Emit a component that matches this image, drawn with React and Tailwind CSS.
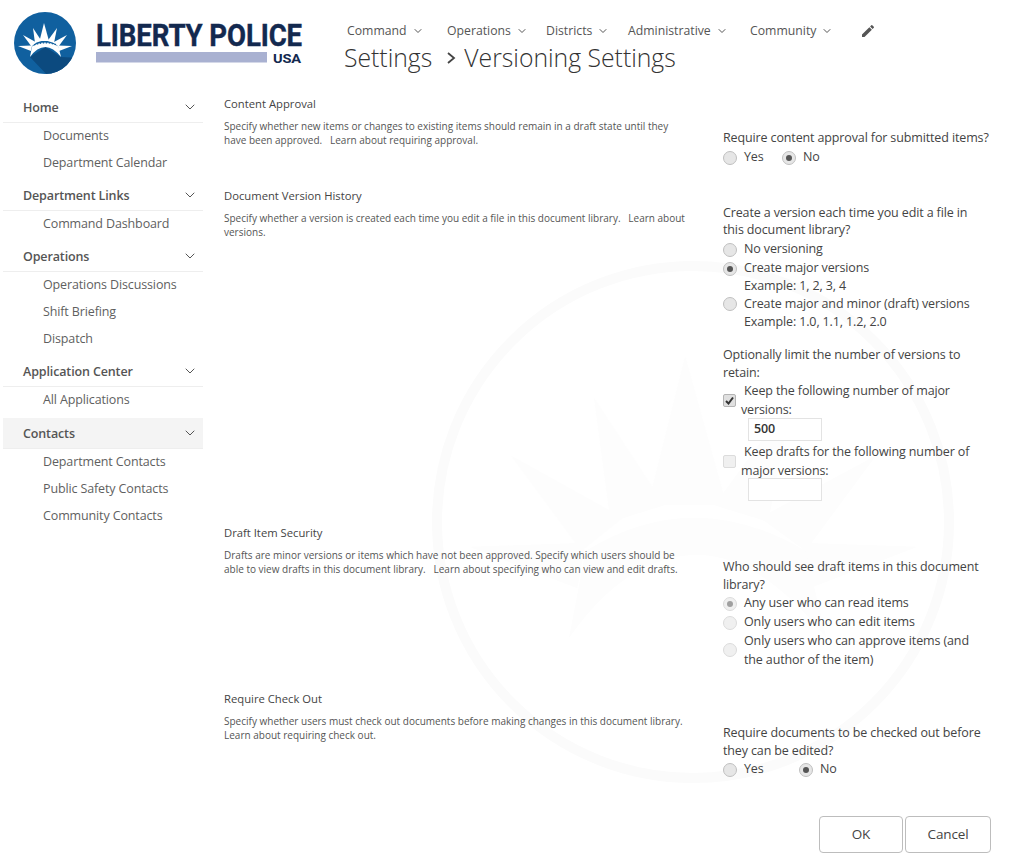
import React from "react";
import { ChevronDown } from "lucide-react";

const nav = [
  { label: "Command", w: "w-[100px]" },
  { label: "Operations", w: "w-[99px]" },
  { label: "Districts", w: "w-[82px]" },
  { label: "Administrative", w: "w-[122px]" },
  { label: "Community", w: "w-[110px]" },
];

const sideNav = [
  { title: "Home", items: ["Documents", "Department Calendar"] },
  { title: "Department Links", items: ["Command Dashboard"] },
  { title: "Operations", items: ["Operations Discussions", "Shift Briefing", "Dispatch"] },
  { title: "Application Center", items: ["All Applications"] },
  { title: "Contacts", active: true, items: ["Department Contacts", "Public Safety Contacts", "Community Contacts"] },
];

// crown from the logo, also reused big and faint for the page watermark
function Crown({ fill, band }) {
  return (
    <g fill={fill}>
      <path d="M44 23 L39.500 41 L49 41 Z" />
      <path d="M33 28 L35 43 L41.500 41 Z" />
      <path d="M57 28 L47.500 41 L54 43 Z" />
      <path d="M23 35 L31.500 46.500 L36.500 42.500 Z" />
      <path d="M67 35 L53 42.500 L58.500 46.500 Z" />
      <path d="M18 46 L31 51 L32 45.500 Z" />
      <path d="M72 46 L58 45.500 L59 51 Z" />
      <path d="M30 57 L32 46.500 Q45 38.500 58.500 46.500 L61 57 Q53 47 45.500 47 Q37 47 30 57 Z" />
      {band && (
        <path d="M34 45 Q45 40.500 57 45" stroke={band} strokeWidth="1.300" strokeDasharray="1.500 1.500" fill="none" />
      )}
    </g>
  );
}

function Logo() {
  return (
    <svg width="330" height="86" viewBox="0 0 330 86" className="shrink-0">
      <defs>
        <clipPath id="disc">
          <circle cx="45" cy="43" r="31" />
        </clipPath>
      </defs>
      <circle cx="45" cy="43" r="31" fill="#10609f" />
      <path d="M30 57 L50 78 L80 78 L80 58 L61 57 L45.500 47 Z" fill="#0c4a7f" clipPath="url(#disc)" />
      <Crown fill="#ffffff" band="#10609f" />
      <text
        x="96"
        y="45.500"
        textLength="206"
        lengthAdjust="spacingAndGlyphs"
        fontFamily="Roboto, sans-serif"
        fontWeight="700"
        fontSize="31"
        fill="#13294f"
        stroke="#13294f"
        strokeWidth="0.400"
      >
        LIBERTY POLICE
      </text>
      <rect x="96" y="52" width="171" height="10.500" fill="#a9b1d1" />
      <text
        x="273"
        y="62.500"
        textLength="28"
        lengthAdjust="spacingAndGlyphs"
        fontFamily="Roboto, sans-serif"
        fontWeight="700"
        fontSize="13.500"
        fill="#13294f"
      >
        USA
      </text>
    </svg>
  );
}

function Watermark() {
  return (
    <svg width="560" height="560" viewBox="0 0 560 560" className="absolute left-[410px] top-[240px] pointer-events-none">
      <circle cx="283" cy="282" r="256" fill="none" stroke="#fbfbfb" strokeWidth="10" />
      <g transform="translate(-90 -75) scale(8.300)">
        <Crown fill="#fdfdfd" />
      </g>
    </svg>
  );
}

function Radio({ checked, disabled }) {
  return (
    <span
      className={
        "flex h-[14px] w-[14px] shrink-0 items-center justify-center rounded-full border " +
        (disabled ? "border-[#dcdcdc] bg-[#f0f0f0]" : "border-[#c0c0c0] bg-[#e6e6e6]")
      }
    >
      {checked && (
        <span className={"h-[6px] w-[6px] rounded-full " + (disabled ? "bg-[#a0a0a0]" : "bg-[#555555]")} />
      )}
    </span>
  );
}

function RadioRow({ checked, disabled, children }) {
  return (
    <div className="flex items-center gap-[7px] min-h-[19px]">
      <Radio checked={checked} disabled={disabled} />
      <div>{children}</div>
    </div>
  );
}

function Check({ checked, disabled }) {
  return (
    <span
      className={
        "flex h-[13px] w-[13px] shrink-0 items-center justify-center rounded-[2px] border " +
        (disabled ? "border-[#dcdcdc] bg-[#f0f0f0]" : "border-[#b4b4b4] bg-[#e0e0e0]")
      }
    >
      {checked && (
        <svg width="9" height="9" viewBox="0 0 9 9">
          <path d="M1 5 L3.500 7.500 L8 1.500" stroke="#333" strokeWidth="2" fill="none" />
        </svg>
      )}
    </span>
  );
}

function KeepRow({ checked, disabled, value, inputTop, children }) {
  return (
    <div>
      <div className="flex items-center gap-[5px] leading-[18.500px]">
        <Check checked={checked} disabled={disabled} />
        <div className="indent-[3px]">{children}</div>
      </div>
      <div className={"ml-[25px] flex h-[23px] w-[74px] items-center border border-[#e3e3e3] bg-white pl-[5px] font-semibold text-[#333] " + inputTop}>
        {value}
      </div>
    </div>
  );
}

function Section({ title, desc, height, top, children }) {
  return (
    <section className={"grid grid-cols-[499px_1fr] " + height}>
      <div className="w-[466px]">
        <h3 className="text-[11.250px] leading-[17px] tracking-normal text-[#444]">{title}</h3>
        <p className="mt-[7px] text-[10px] leading-[14px] tracking-normal text-[#555]">{desc}</p>
      </div>
      <div className={top}>{children}</div>
    </section>
  );
}

export default function App() {
  return (
    <div className="relative h-[860px] w-[1009px] overflow-hidden bg-white font-['Open_Sans',sans-serif] text-[12.500px] tracking-[-0.130px] text-[#444]">
      <Watermark />

      {/* Header */}
      <header className="relative flex h-[86px]">
        <Logo />
        <div className="ml-[14px] pt-[21px]">
          <nav className="flex h-[20px] items-center pl-[3px] text-[12.250px] tracking-normal text-[#555]">
            {nav.map((n) => (
              <div key={n.label} className={"flex items-center gap-[5px] " + n.w}>
                {n.label}
                <ChevronDown size={12} strokeWidth={2} />
              </div>
            ))}
            <svg width="16" height="16" viewBox="0 0 24 24" fill="#555555">
              <path d="M3 17.250V21h3.750L17.810 9.940l-3.750-3.750L3 17.250zM20.710 7.040a1 1 0 0 0 0-1.410l-2.340-2.340a1 1 0 0 0-1.410 0l-1.830 1.830 3.750 3.750 1.830-1.830z" />
            </svg>
          </nav>
          <h1 className="-mt-[2px] flex h-[38px] items-center text-[24.750px] font-light tracking-normal text-[#333]">
            <span>Settings</span>
            <svg width="10" height="14" viewBox="0 0 10 14" className="ml-[14px] mr-[8px]">
              <path d="M2 2 L8 7 L2 12" stroke="#444" strokeWidth="1.800" fill="none" />
            </svg>
            <span>Versioning Settings</span>
          </h1>
        </div>
      </header>

      <div className="relative flex">
        {/* Sidebar */}
        <aside className="ml-[3px] w-[200px] shrink-0 pt-[9px]">
          {sideNav.map((g) => (
            <div key={g.title} className={g.active ? "mb-[6px] -mt-[2px]" : "mb-[6px]"}>
              <div
                className={
                  "flex items-center justify-between border-b border-[#eeeeee] pl-[20px] pr-[5px] font-semibold text-[#555] " +
                  (g.active ? "h-[31px] bg-[#f4f4f4] pt-[3px]" : "h-[28px]")
                }
              >
                {g.title}
                <ChevronDown size={16} strokeWidth={1.500} className="-mt-[4px]" />
              </div>
              <ul>
                {g.items.map((i) => (
                  <li key={i} className="flex h-[27px] items-center pl-[40px] text-[#5f5f5f]">
                    {i}
                  </li>
                ))}
              </ul>
            </div>
          ))}
        </aside>

        {/* Settings */}
        <main className="ml-[21px] w-[770px] pt-[9px]">
          <Section
            title="Content Approval"
            desc={"Specify whether new items or changes to existing items should remain in a draft state until they have been approved.\u00a0\u00a0 Learn about requiring approval."}
            height="h-[92px]"
            top="pt-[34px]"
          >
            <div className="mb-[1px] leading-[18px]">Require content approval for submitted items?</div>
            <div className="flex">
              <div className="w-[59px]"><RadioRow>Yes</RadioRow></div>
              <RadioRow checked>No</RadioRow>
            </div>
          </Section>

          <Section
            title="Document Version History"
            desc={"Specify whether a version is created each time you edit a file in this document library.\u00a0\u00a0 Learn about versions."}
            height="h-[337px]"
            top="pt-[17px]"
          >
            <div className="mb-[2px] leading-[17px]">
              Create a version each time you edit a file in<br />this document library?
            </div>
            <RadioRow>No versioning</RadioRow>
            <RadioRow checked>Create major versions</RadioRow>
            <div className="pl-[21px] leading-[16.500px]">Example: 1, 2, 3, 4</div>
            <RadioRow>Create major and minor (draft) versions</RadioRow>
            <div className="pl-[21px] leading-[16.500px]">Example: 1.0, 1.1, 1.2, 2.0</div>
            <div className="mt-[16px] mb-[1px] leading-[17.500px]">
              Optionally limit the number of versions to<br />retain:
            </div>
            <KeepRow checked value="500" inputTop="-mt-[1px]">Keep the following number of major<br />versions:</KeepRow>
            <div className="mt-[2px]">
              <KeepRow disabled inputTop="-mt-[2px]">Keep drafts for the following number of<br />major versions:</KeepRow>
            </div>
          </Section>

          <Section
            title="Draft Item Security"
            desc={"Drafts are minor versions or items which have not been approved. Specify which users should be able to view drafts in this document library.\u00a0\u00a0 Learn about specifying who can view and edit drafts."}
            height="h-[166px]"
            top="pt-[34px]"
          >
            <div className="mb-[1px] leading-[17.500px]">
              Who should see draft items in this document<br />library?
            </div>
            <RadioRow checked disabled>Any user who can read items</RadioRow>
            <RadioRow disabled>Only users who can edit items</RadioRow>
            <div className="-mt-[1px]">
              <RadioRow disabled>
                <div className="leading-[19px]">Only users who can approve items (and<br />the author of the item)</div>
              </RadioRow>
            </div>
          </Section>

          <Section
            title="Require Check Out"
            desc={"Specify whether users must check out documents before making changes in this document library.\u00a0\u00a0 Learn about requiring check out."}
            height="h-[126px]"
            top="pt-[34px]"
          >
            <div className="mb-[1px] leading-[17.500px]">
              Require documents to be checked out before<br />they can be edited?
            </div>
            <div className="flex">
              <div className="w-[76px]"><RadioRow>Yes</RadioRow></div>
              <RadioRow checked>No</RadioRow>
            </div>
          </Section>

          <div className="flex justify-end gap-[2px] pr-[3px]">
            <button className="h-[37px] w-[84px] rounded-[4px] border border-[#bdbdbd] bg-white text-[13.500px] text-[#444]">OK</button>
            <button className="h-[37px] w-[86px] rounded-[4px] border border-[#bdbdbd] bg-white text-[13.500px] text-[#444]">Cancel</button>
          </div>
        </main>
      </div>
    </div>
  );
}
